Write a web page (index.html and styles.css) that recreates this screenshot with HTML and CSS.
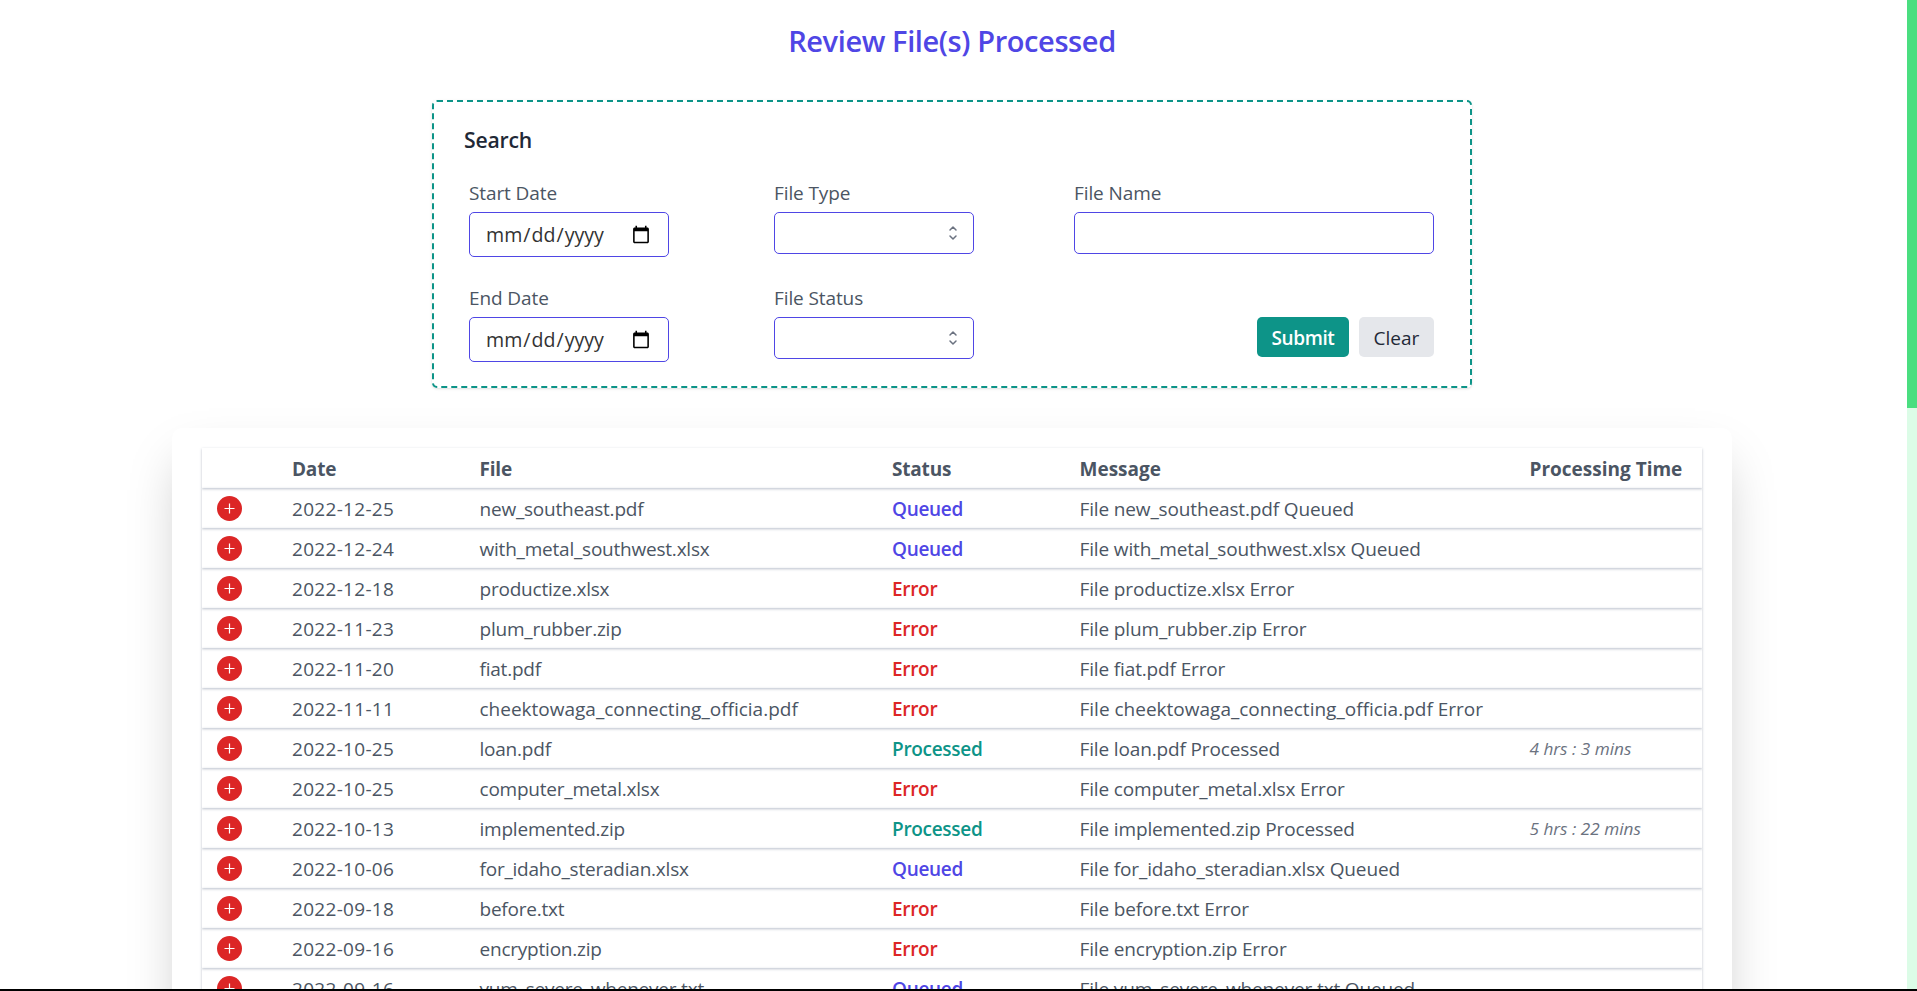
FILE: index.html
```html
<!DOCTYPE html>
<html lang="en-US">
<head>
<meta charset="utf-8">
<title>Review File(s) Processed</title>
<link rel="stylesheet" href="styles.css">
</head>
<body>
<div class="viewport">
<main class="page">
  <h1 class="title">Review File(s) Processed</h1>
  <form class="search">
    <h2 class="search-title">Search</h2>
    <div class="fields">
      <div class="field"><label>Start Date</label><input class="control date" type="date"></div>
      <div class="field"><label>File Type</label><div class="select-wrap"><select class="control"></select><svg class="chev" viewBox="0 0 20 20"><path d="M7 7l3-3 3 3m0 6l-3 3-3-3"/></svg></div></div>
      <div class="field"><label>File Name</label><input class="control" type="text"></div>
      <div class="field"><label>End Date</label><input class="control date" type="date"></div>
      <div class="field"><label>File Status</label><div class="select-wrap"><select class="control"></select><svg class="chev" viewBox="0 0 20 20"><path d="M7 7l3-3 3 3m0 6l-3 3-3-3"/></svg></div></div>
      <div class="actions"><button type="button" class="btn submit">Submit</button><button type="button" class="btn clear">Clear</button></div>
    </div>
  </form>
  <section class="results">
    <div class="table" id="table">
      <div class="row head"><span></span><span>Date</span><span>File</span><span>Status</span><span class="wide">Message</span><span class="wide">Processing Time</span></div>
    </div>
  </section>
</main>
<div class="scrollbar"><div class="thumb"></div></div>
</div>
<div class="bottom-edge"></div>
<script src="rows.js"></script>
</body>
</html>
```
FILE: rows.js
```js
const files = [
  ["2022-12-25", "new_southeast.pdf", "Queued", ""],
  ["2022-12-24", "with_metal_southwest.xlsx", "Queued", ""],
  ["2022-12-18", "productize.xlsx", "Error", ""],
  ["2022-11-23", "plum_rubber.zip", "Error", ""],
  ["2022-11-20", "fiat.pdf", "Error", ""],
  ["2022-11-11", "cheektowaga_connecting_officia.pdf", "Error", ""],
  ["2022-10-25", "loan.pdf", "Processed", "4 hrs : 3 mins"],
  ["2022-10-25", "computer_metal.xlsx", "Error", ""],
  ["2022-10-13", "implemented.zip", "Processed", "5 hrs : 22 mins"],
  ["2022-10-06", "for_idaho_steradian.xlsx", "Queued", ""],
  ["2022-09-18", "before.txt", "Error", ""],
  ["2022-09-16", "encryption.zip", "Error", ""],
  ["2022-09-16", "yum_severe_whenever.txt", "Queued", ""]
];
const plus = '<svg class="plus" viewBox="0 0 25 25"><circle cx="12.5" cy="12.5" r="12.5"/><path d="M12.5 7.5v10M7.5 12.5h10"/></svg>';
document.getElementById("table").insertAdjacentHTML("beforeend", files.map(([date, file, status, time]) =>
  `<div class="row${file.length > 30 ? " long" : ""}">${plus}<span class="day">${date}</span><span class="name">${file}</span><span class="status ${status.toLowerCase()}">${status}</span><span class="message">File ${file} ${status}</span><span class="time">${time}</span></div>`
).join(""));
```
FILE: styles.css
```css
* { box-sizing: border-box; }
html, body { margin: 0; height: 100%; overflow: hidden; }
body {
  display: flex;
  flex-direction: column;
  font-family: "Open Sans", "Noto Sans", sans-serif;
  font-size: 19px;
  color: #4b5563;
  background: #fff;
}
.viewport { flex: 1; min-height: 0; display: flex; overflow: hidden; }
.page { flex: 1; padding-right: 3px; height: 989px; overflow: hidden; }
.scrollbar { width: 10px; background: #dcfce7; }
.thumb { height: 408px; background: #4ade80; }
.bottom-edge { height: 2px; background: #000; }

.title {
  margin: 20px 0 0;
  text-align: center;
  font-size: 29px;
  line-height: 42px;
  font-weight: 600;
  letter-spacing: -0.4px;
  color: #4f46e5;
}
.search {
  width: 1040px;
  height: 288px;
  margin: 38px auto 0;
  padding: 24px 36px 0 30px;
  border: 2px dashed #0d9488;
  border-radius: 5px;
  box-shadow: 0 1px 3px rgba(0,0,0,.1), 0 1px 2px -1px rgba(0,0,0,.1);
}
.search-title { margin: 0; font-size: 21.2px; line-height: 28px; font-weight: 600; letter-spacing: -0.2px; color: #1f2937; }
.fields {
  display: grid;
  grid-template-columns: 305px 300px 360px;
  grid-auto-rows: 105px;
  padding: 23px 0 0 5px;
}
.field label { display: block; line-height: 30px; padding-top: 1px; height: 35px; letter-spacing: -0.1px; }
.select-wrap { width: 200px; }
.control {
  display: block;
  width: 100%;
  height: 42px;
  border: 1px solid #4f46e5;
  border-radius: 5px;
  background: #fff;
  appearance: none;
  font: inherit;
  color: #1f2937;
  outline: 0;
}
.control.date { width: 200px; height: 45px; padding: 0 15px; font-size: 19.6px; color: #333; }
.select-wrap { position: relative; }
.chev { position: absolute; right: 11px; top: 11px; width: 20px; height: 20px; fill: none; stroke: #6b7280; stroke-width: 1.5; stroke-linecap: round; stroke-linejoin: round; }
.actions { display: flex; justify-content: flex-end; gap: 10px; padding-top: 35px; }
.btn { height: 40px; border: 0; border-radius: 5px; padding: 2px 0 0; font: inherit; line-height: 38px; }
.submit { width: 92px; background: #0d9488; color: #fff; font-weight: 600; letter-spacing: -0.4px; }
.clear { width: 75px; background: #e5e7eb; color: #1f2937; }

.results {
  width: 1560px;
  margin: 40px auto 0;
  padding: 20px 30px;
  border-radius: 10px;
  background: #fff;
  box-shadow: 0 25px 50px -12px rgba(0,0,0,.25);
}
.row {
  display: grid;
  grid-template-columns: 75px 187.5px 412.5px 187.5px 450px 1fr;
  align-items: center;
  height: 40px;
  padding-left: 15px;
  white-space: nowrap;
  box-shadow: 0 1px 3px rgba(71,85,115,.2), 0 1px 2px rgba(71,85,115,.18);
}
.row span { line-height: 28px; padding-top: 2px; }
.head { font-weight: 700; letter-spacing: -0.2px; }
.head .wide { letter-spacing: 0; }
.plus { width: 25px; height: 25px; margin-top: 1px; }
.plus circle { fill: #dc2626; }
.plus path { stroke: #fff; stroke-width: 1.2; }
.day { letter-spacing: 0.3px; }
.name { letter-spacing: -0.22px; }
.message { letter-spacing: -0.14px; }
.long .name, .long .message { letter-spacing: 0; }
.status { font-weight: 600; letter-spacing: -0.3px; }
.queued { color: #4f46e5; }
.error { color: #dc2626; }
.processed { color: #0d9488; }
.row .time { font-size: 17.2px; font-style: italic; color: #6b7280; }
```
